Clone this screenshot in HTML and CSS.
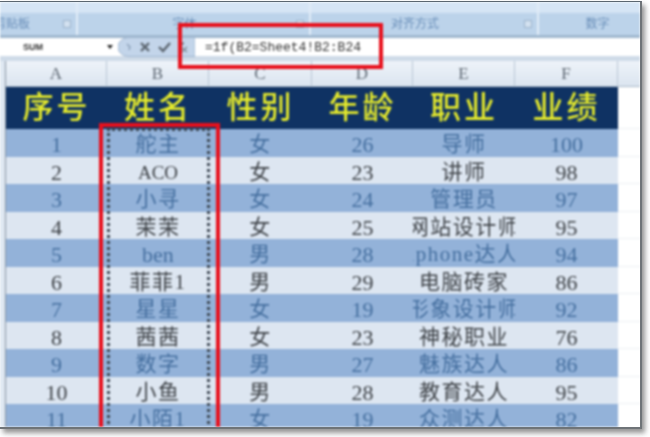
FILE: index.html
```html
<!DOCTYPE html>
<html lang="zh-CN">
<head>
<meta charset="utf-8">
<title>Excel</title>
<link rel="stylesheet" href="styles.css">
</head>
<body>
<div class="window">
  <div class="content">
    <div class="ribbon">
      <div class="group g1"><span class="glabel cut">剪贴板</span><span class="launcher"></span></div>
      <div class="group g2"><span class="glabel">字体</span><span class="launcher"></span></div>
      <div class="group g3"><span class="glabel">对齐方式</span><span class="launcher"></span></div>
      <div class="group g4"><span class="glabel">数字</span></div>
    </div>
    <div class="fbar">
      <div class="namebox"><span class="nametext">SUM</span><span class="arrow"></span></div>
      <div class="fbtns">
        <svg class="fsvg" width="77" height="20" viewBox="0 0 77 20">
          <path d="M12 .5H77V19.5H12C4 19.5 0 15 0 10S4 .5 12 .5Z" fill="#c3d5ea" stroke="#9fb6d0"/>
          <path d="M9 7l3 3-1 3" fill="none" stroke="#8ea3bb" stroke-width="1.5"/>
          <path d="M23 6l8 8M31 6l-8 8" stroke="#5c6670" stroke-width="2.4"/>
          <path d="M41 10l4 4 7-8" fill="none" stroke="#5c6670" stroke-width="2.4"/>
          <path d="M60 15c3 0 2-9 6-9" fill="none" stroke="#5c6670" stroke-width="1.6"/>
          <path d="M63 10l6 5M69 10l-5 5" stroke="#7f8b96" stroke-width="1.4"/>
        </svg>
      </div>
      <div class="finput">=1f(B2=Sheet4!B2:B24</div>
    </div>
    <div class="sheet">
      <div class="gutter"></div>
      <div class="grid">
        <div class="ch">A</div><div class="ch">B</div><div class="ch">C</div><div class="ch">D</div><div class="ch">E</div><div class="ch">F</div><div class="ch blank"></div>

        <div class="th">序号</div><div class="th">姓名</div><div class="th">性别</div><div class="th">年龄</div><div class="th">职业</div><div class="th">业绩</div><div class="blank"></div>

        <div class="td o n">1</div><div class="td o">舵主</div><div class="td o">女</div><div class="td o n">26</div><div class="td o">导师</div><div class="td o n">100</div><div class="blank"></div>
        <div class="td e n">2</div><div class="td e a">ACO</div><div class="td e">女</div><div class="td e n">23</div><div class="td e">讲师</div><div class="td e n">98</div><div class="blank"></div>
        <div class="td o n">3</div><div class="td o">小寻</div><div class="td o">女</div><div class="td o n">24</div><div class="td o">管理员</div><div class="td o n">97</div><div class="blank"></div>
        <div class="td e n">4</div><div class="td e">茉茉</div><div class="td e">女</div><div class="td e n">25</div><div class="td e">网站设计师</div><div class="td e n">95</div><div class="blank"></div>
        <div class="td o n">5</div><div class="td o n">ben</div><div class="td o">男</div><div class="td o n">28</div><div class="td o">iphone达人</div><div class="td o n">94</div><div class="blank"></div>
        <div class="td e n">6</div><div class="td e">菲菲1</div><div class="td e">男</div><div class="td e n">29</div><div class="td e">电脑砖家</div><div class="td e n">86</div><div class="blank"></div>
        <div class="td o n">7</div><div class="td o">星星</div><div class="td o">女</div><div class="td o n">19</div><div class="td o">形象设计师</div><div class="td o n">92</div><div class="blank"></div>
        <div class="td e n">8</div><div class="td e">茜茜</div><div class="td e">女</div><div class="td e n">23</div><div class="td e">神秘职业</div><div class="td e n">76</div><div class="blank"></div>
        <div class="td o n">9</div><div class="td o">数字</div><div class="td o">男</div><div class="td o n">27</div><div class="td o">魅族达人</div><div class="td o n">86</div><div class="blank"></div>
        <div class="td e n">10</div><div class="td e">小鱼</div><div class="td e">男</div><div class="td e n">28</div><div class="td e">教育达人</div><div class="td e n">95</div><div class="blank"></div>
        <div class="td o n">11</div><div class="td o">小陌1</div><div class="td o">女</div><div class="td o n">19</div><div class="td o">众测达人</div><div class="td o n">82</div><div class="blank"></div>
      </div>
    </div>
    <div class="marquee"></div>
    <div class="redbox fbox"></div>
    <div class="redbox colbox"></div>
  </div>
</div>
</body>
</html>
```

FILE: styles.css
```css
html, body {
  margin: 0;
  padding: 0;
  width: 650px;
  height: 437px;
  overflow: hidden;
  background: #fff;
}
body {
  padding: 1px 0 0 0;
  box-sizing: border-box;
  font-family: "Liberation Serif", "Noto Sans CJK SC", serif;
}
.window {
  width: 640px;
  height: 425px;
  background: #fff;
  border-top: 1px solid #5b6670;
  border-right: 2px solid #6f7478;
  border-bottom: 2px solid #6f7478;
  box-shadow: 3px 4px 5px rgba(60, 60, 60, .55);
  overflow: hidden;
}
.content {
  position: relative;
  height: 100%;
  filter: blur(.8px);
  overflow: hidden;
}
.ribbon {
  height: 33px;
  display: flex;
  background: linear-gradient(#d6e5f5 0, #d6e5f5 10px, #bcd3ea 12px, #bcd3ea 33px);
  border-bottom: 3px solid #a0b8cf;
}
.group {
  position: relative;
  display: flex;
  align-items: flex-end;
  justify-content: center;
  padding-bottom: 4px;
  border-right: 2px solid #e1ecf7;
  box-sizing: border-box;
  color: #6a8fb9;
  font: 12px "Noto Sans CJK SC", sans-serif;
}
.g1 { width: 78px; justify-content: flex-start; }
.g2 { width: 233px; padding-right: 18px; }
.g3 { width: 228px; padding-right: 18px; }
.g4 { flex: 1; border-right: 0; padding-left: 16px; }
.cut { margin-left: -6px; }
.launcher {
  position: absolute;
  right: 5px;
  bottom: 7px;
  width: 6px;
  height: 6px;
  border: 1px solid #9db4cc;
  background: #d3e1f0;
}
.fbar {
  height: 18px;
  display: flex;
  align-items: center;
  background: #fff;
  border-bottom: 5px solid #cfdbe8;
}
.namebox {
  width: 118px;
  display: flex;
  align-items: center;
  justify-content: space-between;
  padding: 0 5px 0 23px;
  box-sizing: border-box;
}
.nametext {
  font: bold 9px "Liberation Sans", sans-serif;
  color: #333;
}
.arrow {
  border: 3.5px solid transparent;
  border-top: 4px solid #222;
  border-bottom: 0;
}
.fbtns {
  width: 77px;
  height: 18px;
  flex: none;
  display: flex;
  align-items: center;
}
.fsvg { display: block; }
.finput {
  flex: 1;
  padding-left: 10px;
  font: 13px "Liberation Mono", monospace;
  color: #333;
}
.sheet {
  display: flex;
  background: #fff;
}
.gutter {
  width: 6px;
  flex: none;
  background: #dfe8f2;
  border-right: 1px solid #8a96a3;
  box-sizing: border-box;
}
.grid {
  display: grid;
  grid-template-columns: 101px 102px 103px 101px 102px 103px 22px;
  grid-template-rows: 26px 42px repeat(11, 27.5px);
}
.ch {
  display: flex;
  align-items: center;
  justify-content: center;
  background: linear-gradient(#eef3f9, #dbe5f0);
  border-right: 1px solid #b9c6d5;
  border-bottom: 1px solid #a9b8c8;
  box-sizing: border-box;
  color: #5d6772;
  font-size: 17px;
  font-family: "Liberation Serif", serif;
}
.ch.blank { border-right: 0; }
.th {
  display: flex;
  align-items: center;
  justify-content: center;
  background: #0f3263;
  color: #e4e92c;
  font-size: 31px;
  line-height: 36px;
  font-weight: 500;
  letter-spacing: 3px;
}
.td {
  display: flex;
  align-items: center;
  justify-content: center;
  overflow: hidden;
  white-space: nowrap;
  line-height: 23px;
  padding-top: 4px;
  font-size: 21px;
  letter-spacing: 1.5px;
  box-sizing: border-box;
}
.td.n { font-size: 22px; letter-spacing: 0; }
.td.a { font-size: 19px; letter-spacing: 0; }
.o { background: #93b2d9; color: #456f9f; }
.e { background: #dde6f1; color: #3e4247; }
.blank:not(.ch) { background: #fff; border-bottom: 1px solid #eceff3; }
.marquee {
  position: absolute;
  left: 107px;
  top: 126px;
  width: 103px;
  height: 320px;
  border: 3px dotted #3d4753;
  box-sizing: border-box;
}
.redbox {
  position: absolute;
  border: 4px solid #e8101c;
  box-sizing: border-box;
}
.fbox {
  left: 178px;
  top: 21px;
  width: 205px;
  height: 46px;
}
.colbox {
  left: 99px;
  top: 121px;
  width: 121px;
  height: 330px;
}
```
